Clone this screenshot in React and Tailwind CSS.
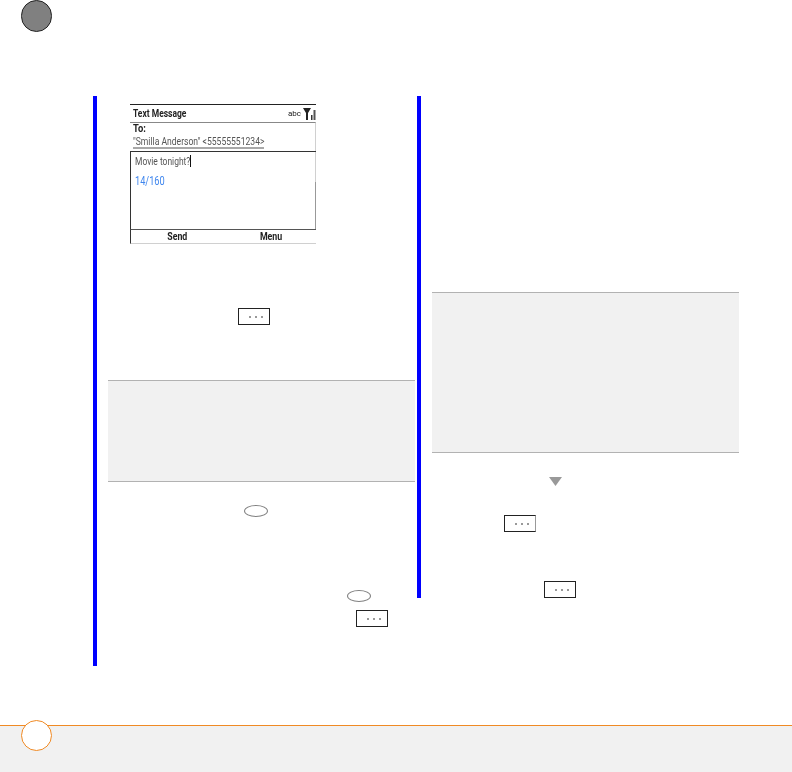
function MoreKey({ edge = "border-[#222222]" }) {
  return (
    <span className={`flex h-[17px] w-[32px] items-center justify-center gap-[4px] border bg-white pl-[3px] ${edge}`}>
      <span className="h-[2px] w-[2px] bg-[#999999]" />
      <span className="h-[2px] w-[2px] bg-[#999999]" />
      <span className="h-[2px] w-[2px] bg-[#999999]" />
    </span>
  );
}

function OvalKey() {
  return <span className="block h-[12px] w-[24px] rounded-[50%] border border-[#808080] bg-white" />;
}

function GrayBox({ className }) {
  return <div className={`border-y border-[#b2b2b2] bg-[#f1f1f1] ${className}`} />;
}

function PhoneScreen() {
  return (
    <div className="ml-[33px] flex h-[140px] w-[186px] flex-col font-['Roboto',sans-serif] text-[11px] leading-none text-[#222222] blur-[0.3px]">
      {/* title bar */}
      <div className="flex h-[18px] items-center justify-between border-t border-[#222222] pl-[3px]">
        <span className="origin-left scale-x-[0.77] whitespace-nowrap font-bold">Text Message</span>
        <span className="flex items-center gap-[2px]">
          <span className="text-[8px]">abc</span>
          <svg width="13" height="12" viewBox="0 0 13 12">
            <path d="M0 0h8L5 5v7H3V5z" fill="#222222" />
            <rect x="8" y="7" width="1.5" height="5" fill="#333333" />
            <rect x="10.5" y="2" width="2" height="10" fill="#555555" />
          </svg>
        </span>
      </div>
      {/* recipient */}
      <div className="flex h-[29px] flex-col gap-[2px] border-t border-r border-t-[#888888] border-r-[#d0d0d0] pl-[3px]">
        <span className="origin-left scale-x-[0.85] font-bold">To:</span>
        <span className="w-[131px] border-b-2 border-[#a8a8a8] text-[#555555]">
          <span className="inline-block origin-left scale-x-[0.78] whitespace-nowrap">"Smilla Anderson" &lt;55555551234&gt;</span>
        </span>
      </div>
      {/* message */}
      <div className="flex h-[78px] flex-col border-t border-l border-[#333333]">
        <div className="flex h-[30px] flex-col border-r border-[#d0d0d0] pl-[4px] pt-[3px]">
          <span className="flex items-center text-[#555555]">
            <span className="w-[55px] origin-left scale-x-[0.77] whitespace-nowrap">Movie tonight?</span>
            <span className="h-[12px] w-[1px] bg-[#111111]" />
          </span>
          <span className="mt-[3px] h-[2px] w-[28px] bg-[#a9c6f5]" />
          <span className="mt-[4px] origin-left scale-x-[0.71] whitespace-nowrap text-[13px] text-[#3f86ee]">14/160</span>
        </div>
        <div className="flex-1 border-r border-[#999999]" />
      </div>
      {/* softkeys */}
      <div className="flex h-[15px] items-center border-x-0 border-y border-l border-t-[#555555] border-b-[#d0d0d0] border-l-[#333333] font-bold">
        <span className="w-[93px] scale-x-[0.8] text-center">Send</span>
        <span className="w-[93px] scale-x-[0.8] pl-[2px] text-center">Menu</span>
      </div>
    </div>
  );
}

export default function App() {
  return (
    <div className="flex h-[772px] w-[792px] flex-col bg-white">
      <header className="h-[96px] pl-[21px]">
        <div className="h-[32px] w-[31px] rounded-full border border-[#222222] bg-[#808080]" />
      </header>

      <main className="flex h-[629px] items-start pl-[93px]">
        {/* left column */}
        <section className="flex h-[570px] w-[324px] flex-col border-l-4 border-[#0000ff] pt-[8px]">
          <PhoneScreen />
          <div className="ml-[141px] mt-[64px]">
            <MoreKey />
          </div>
          <GrayBox className="ml-[11px] mt-[55px] h-[102px] w-[307px]" />
          <div className="ml-[147px] mt-[23px]">
            <OvalKey />
          </div>
          <div className="ml-[250px] mt-[73px]">
            <OvalKey />
          </div>
          <div className="ml-[259px] mt-[8px]">
            <MoreKey />
          </div>
        </section>

        {/* right column */}
        <section className="flex h-[502px] w-[322px] flex-col border-l-4 border-[#0000ff] pt-[196px]">
          <GrayBox className="ml-[11px] h-[161px] w-[307px]" />
          <svg className="ml-[128px] mt-[24px]" width="13" height="9" viewBox="0 0 13 9">
            <path d="M0 0h13L6.5 9z" fill="#999999" />
          </svg>
          <div className="ml-[83px] mt-[29px]">
            <MoreKey edge="border-[#222222] border-r-[#999999]" />
          </div>
          <div className="ml-[123px] mt-[49px]">
            <MoreKey />
          </div>
        </section>
      </main>

      <footer className="h-[47px] border-t border-[#f08a24] bg-[#f1f1f1] pl-[21px]">
        <div className="-mt-[6px] h-[31px] w-[31px] rounded-full border border-[#f08a24] bg-white" />
      </footer>
    </div>
  );
}
